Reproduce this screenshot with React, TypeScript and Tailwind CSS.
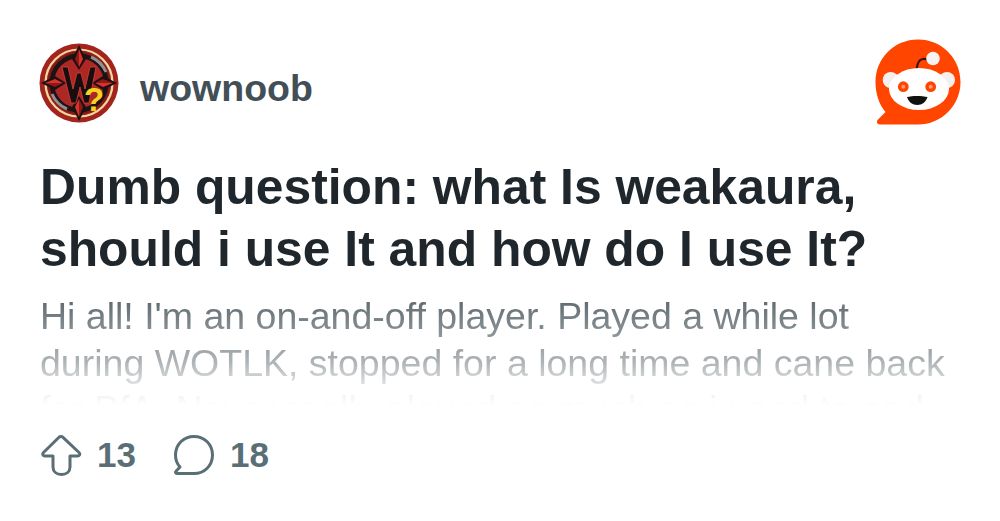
import React from 'react';

function Spike({ rotate }: { rotate: number }) {
  return (
    <g transform={`rotate(${rotate} 40 40)`}>
      <path d="M40 2 L47 16 L40 27 L33 16 Z" fill="#1d1012" />
      <path d="M40 6 L44 16 L40 24 Z" fill="#d9322b" />
      <path d="M40 6 L36 16 L40 24 Z" fill="#8e1a18" />
    </g>
  );
}

function Avatar() {
  return (
    <svg width="80" height="80" viewBox="0 0 80 80" className="shrink-0">
      <circle cx="40" cy="40" r="39.5" fill="#a3231d" />
      <circle cx="40" cy="40" r="33.5" fill="none" stroke="#efd9a2" strokeWidth="2.2" />
      <circle cx="40" cy="40" r="31.5" fill="#7d1a17" />
      <circle cx="40" cy="40" r="29.5" fill="#1b1314" />
      <path d="M52 14 A29 29 0 0 1 67 29" fill="none" stroke="#8f8f94" strokeWidth="3" />
      <path d="M13 51 A29 29 0 0 0 28 66" fill="none" stroke="#8f8f94" strokeWidth="3" />
      <circle cx="40" cy="40" r="25" fill="#ad2724" />
      <Spike rotate={0} />
      <Spike rotate={90} />
      <Spike rotate={180} />
      <Spike rotate={270} />
      <path
        d="M23 24 L32 60 L37 60 L41 44 L45 60 L50 60 L57 24 L51 24 L46 46 L42 30 L38 30 L34 46 L29 24 Z"
        fill="#190e0f"
        stroke="#d9413a"
        strokeWidth="0.8"
      />
      <text x="55" y="68" fill="#f7d31e" fontSize="33" fontWeight="700" textAnchor="middle" className="font-['Liberation_Sans']">
        ?
      </text>
    </svg>
  );
}

function RedditLogo() {
  return (
    <svg width="88" height="88" viewBox="0 0 88 88" className="shrink-0">
      <path
        d="M44 0.5 C68 0.5 86.5 19.5 86.5 43 C86.5 67 67 85.5 44 85.5 L6 85.5 C3 85.5 2 82.5 4 80.5 L11.5 73 C5 65.5 1.5 54.5 1.5 43 C1.5 19.5 20 0.5 44 0.5 Z"
        fill="#ff4500"
      />
      <path d="M42.7 31 C43 24 45 20.5 49 20 C51 19.8 53 20.3 55 21" fill="none" stroke="#3a1206" strokeWidth="2.2" strokeLinecap="round" />
      <circle cx="59" cy="19.5" r="6.8" fill="#f7f3f2" />
      <circle cx="16.7" cy="41" r="8" fill="#f4efef" />
      <circle cx="73" cy="41" r="8" fill="#f4efef" />
      <ellipse cx="45" cy="50" rx="30" ry="21" fill="#fff" />
      <circle cx="29.3" cy="47.7" r="5.4" fill="#ff4500" />
      <circle cx="29.3" cy="47.7" r="2" fill="#ff9a7a" />
      <circle cx="56.7" cy="47.7" r="5.4" fill="#ff4500" />
      <circle cx="56.7" cy="47.7" r="2" fill="#ff9a7a" />
      <path d="M33 58 C38 56.5 48 56.5 53.5 58 C52 63 48 66 43.3 66 C38.5 66 34.5 63 33 58 Z" fill="#111" />
    </svg>
  );
}

export default function App() {
  return (
    <div className="w-[1000px] h-[521px] overflow-hidden bg-white px-10 pt-[39px] font-['Liberation_Sans',sans-serif]">
      <div className="flex items-center justify-between -ml-[1px] -mr-[2px]">
        <div className="flex items-center gap-[21px]">
          <Avatar />
          <span className="mt-[10px] text-[37.5px] font-bold text-[#424f56]">wownoob</span>
        </div>
        <RedditLogo />
      </div>

      <h1 className="mt-[29px] text-[49.8px] font-bold leading-[62px] text-[#1f272c]">
        Dumb question: what Is weakaura,
        <br />
        should i use It and how do I use It?
      </h1>

      <div className="mt-[13px] h-[112px] overflow-hidden text-[37.5px] leading-[46.5px] text-[#4e5a60] [mask-image:linear-gradient(to_bottom,rgba(0,0,0,0.95)_0%,rgba(0,0,0,0.45)_62%,rgba(0,0,0,0.1)_88%,rgba(0,0,0,0)_100%)]">
        Hi all! I'm an on-and-off player. Played a while lot
        <br />
        during WOTLK, stopped for a long time and cane back
        <br />
        for BfA. Never really played as much as i used to and
      </div>

      <div className="mt-[24px] flex items-center text-[35px] font-bold text-[#5a6e76]">
        <svg width="42" height="42" viewBox="0 0 42 42" className="ml-[1px] shrink-0">
          <path
            d="M20 2.5 C20.8 2.5 21.5 2.8 22 3.3 L38 18.5 C39.5 20 38.5 22 36.5 22 L29 22 L29 33 C29 37.5 25.5 40.5 20.5 40.5 C15.5 40.5 12 37.5 12 33 L12 22 L4 22 C2 22 1 20 2.5 18.5 L18 3.3 C18.5 2.8 19.2 2.5 20 2.5 Z"
            fill="none"
            stroke="#5a6e76"
            strokeWidth="3"
            strokeLinejoin="round"
          />
        </svg>
        <span className="ml-[14px]">13</span>
        <svg width="42" height="42" viewBox="0 0 42 42" className="ml-[37px] shrink-0">
          <path
            d="M21 2.5 C31.5 2.5 39.5 10.5 39.5 21 C39.5 31.5 31.5 39.5 21 39.5 L4 39.5 C2.5 39.5 2 38.2 3 37.2 L7 33 C3.7 29.5 2.5 25.5 2.5 21 C2.5 10.5 10.5 2.5 21 2.5 Z"
            fill="none"
            stroke="#5a6e76"
            strokeWidth="3"
            strokeLinejoin="round"
          />
        </svg>
        <span className="ml-[15px]">18</span>
      </div>
    </div>
  );
}
